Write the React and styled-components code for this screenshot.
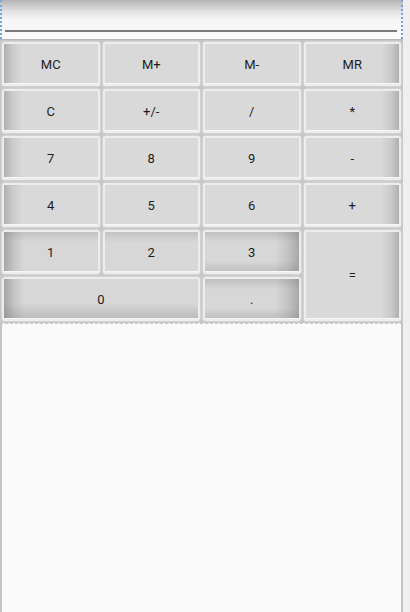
import React from "react";
import styled, { createGlobalStyle, css } from "styled-components";

const GlobalStyle = createGlobalStyle`
  html, body {
    margin: 0;
    padding: 0;
    background: #f0f0f0;
  }
  body {
    font-family: Roboto, "Liberation Sans", sans-serif;
  }
`;

const Page = styled.div`
  display: flex;
  width: 410px;
  height: 612px;
`;

const Main = styled.div`
  width: 403px;
  display: flex;
  flex-direction: column;
`;

const Strip = styled.div`
  flex: 1;
  background: #efefef;
`;

const Display = styled.div`
  height: 39px;
  box-sizing: border-box;
  padding: 0 4px 0 3px;
  border-left: 2px dotted #6aa6e8;
  border-right: 2px dotted #6aa6e8;
  background: linear-gradient(to bottom, #b4b4b4 0px, #e4e4e4 12px, #f6f6f6 20px, #fafafa 100%);
  display: flex;
  flex-direction: column;
  justify-content: flex-start;
`;

const Underline = styled.div`
  margin-top: 30px;
  height: 2px;
  background: #7a7a7a;
`;

const Keypad = styled.div`
  display: grid;
  grid-template-columns: repeat(4, 1fr);
  grid-template-rows: repeat(6, 44px);
  gap: 3px;
  padding: 2px;
  background: #c6c6c6;
  border-top: 1px solid #b8b8b8;
`;

const shades = {
  left: css`
    background: linear-gradient(to right, #a9a9a9 0px, #c9cac9 10px, #d8d9d8 20px);
  `,
  right: css`
    background: linear-gradient(to left, #a9a9a9 0px, #c9cac9 10px, #d8d9d8 20px);
  `,
  flat: css`
    background: #d8d9d8;
  `,
  pressedLeft: css`
    background:
      linear-gradient(to bottom, rgba(120,120,120,0.25) 0px, rgba(120,120,120,0) 12px),
      linear-gradient(to right, #9e9e9e 0px, #c4c5c4 12px, #d6d7d6 22px);
  `,
  pressed: css`
    background:
      linear-gradient(to bottom, rgba(120,120,120,0.25) 0px, rgba(120,120,120,0) 12px),
      #d6d7d6;
  `,
  pressedRight: css`
    background:
      linear-gradient(to bottom, rgba(120,120,120,0.3) 0px, rgba(120,120,120,0) 12px, rgba(120,120,120,0) 70%, rgba(120,120,120,0.3) 100%),
      linear-gradient(to left, #a2a2a2 0px, #c4c5c4 14px, #d6d7d6 26px);
  `,
  zeroRow: css`
    background:
      linear-gradient(to bottom, rgba(120,120,120,0) 0px, rgba(120,120,120,0) 60%, rgba(120,120,120,0.35) 100%),
      linear-gradient(to right, #9e9e9e 0px, #c4c5c4 12px, #d6d7d6 22px);
  `,
};

const Key = styled.button`
  font-family: Roboto, "Liberation Sans", sans-serif;
  font-size: 13px;
  color: #1e1e1e;
  border: none;
  border-radius: 2px;
  padding: 0;
  margin: 0;
  box-shadow:
    inset 0 0 0 2px #ededed,
    inset 0 -3px 0 #f6f6f6,
    0 0 2px rgba(255, 255, 255, 0.8);
  grid-column: ${({ $span }) => ($span ? `span ${$span}` : "auto")};
  grid-row: ${({ $rows }) => ($rows ? `span ${$rows}` : "auto")};
  ${({ $shade }) => shades[$shade || "flat"]}
`;

const Rest = styled.div`
  flex: 1;
  background: #fafafa;
  border-left: 2px solid #c4c4c4;
  border-right: 2px solid #c4c4c4;
  border-top: 1px dashed #c8c8c8;
`;

const keys = [
  { label: "MC", shade: "left" },
  { label: "M+" },
  { label: "M-" },
  { label: "MR", shade: "right" },
  { label: "C", shade: "left" },
  { label: "+/-" },
  { label: "/" },
  { label: "*", shade: "right" },
  { label: "7", shade: "left" },
  { label: "8" },
  { label: "9" },
  { label: "-", shade: "right" },
  { label: "4", shade: "left" },
  { label: "5" },
  { label: "6" },
  { label: "+", shade: "right" },
  { label: "1", shade: "pressedLeft" },
  { label: "2", shade: "pressed" },
  { label: "3", shade: "pressedRight" },
  { label: "=", shade: "right", rows: 2 },
  { label: "0", shade: "zeroRow", span: 2 },
  { label: ".", shade: "pressedRight" },
];

export default function App() {
  return (
    <>
      <GlobalStyle />
      <Page>
        <Main>
          <Display>
            <Underline />
          </Display>
          <Keypad>
            {keys.map((k) => (
              <Key key={k.label} $shade={k.shade} $span={k.span} $rows={k.rows}>
                {k.label}
              </Key>
            ))}
          </Keypad>
          <Rest />
        </Main>
        <Strip />
      </Page>
    </>
  );
}
